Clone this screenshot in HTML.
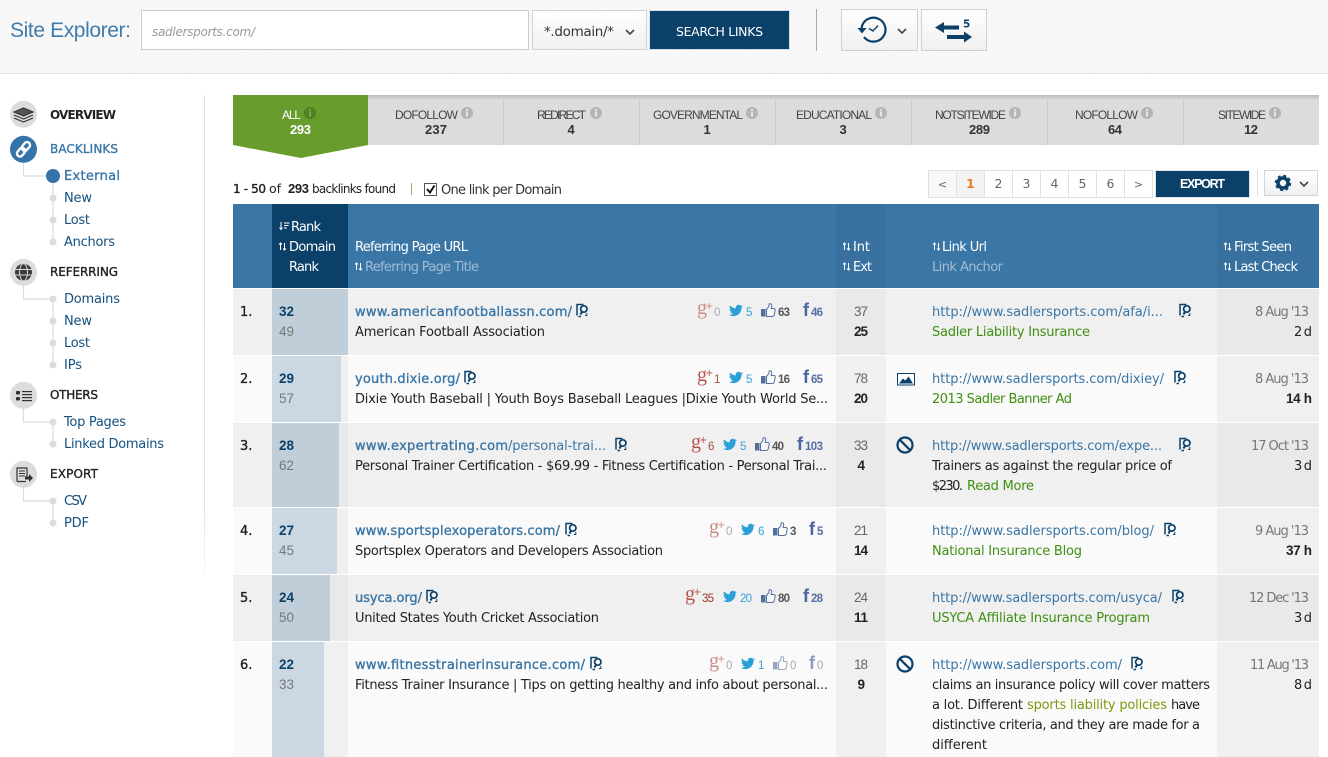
<!DOCTYPE html>
<html lang="en"><head><meta charset="utf-8"><title>Site Explorer</title>
<style>
html,body{margin:0;padding:0;background:#fff;width:1328px;height:757px;overflow:hidden}
svg{display:block}
text{font-family:"DejaVu Sans","Liberation Sans",sans-serif;font-size:13px;fill:#222;white-space:pre}
.b{font-weight:700}
.sb{stroke:currentColor;stroke-width:.35}
.nav{color:#222;fill:#222;font-size:12px}
.sub{fill:#15507f;color:#15507f}
.tab{font-family:"Liberation Sans",sans-serif;font-size:12px;fill:#444}
.tn{font-family:"Liberation Sans",sans-serif;font-size:13px;font-weight:700;fill:#333}
.h{fill:#fff}
.hd{fill:#a3bcd2}
.u{fill:#3a76a6;color:#3a76a6}
.g{fill:#3f8f10}
.gr{fill:#777}
.d{font-family:"Liberation Sans",sans-serif;font-size:13.5px}
.c{font-family:"Liberation Sans",sans-serif;font-size:11.5px;text-anchor:start}
.gp{font-family:"Liberation Serif",serif;font-size:20px}
.gq{font-size:10px}
.fb{font-family:"Liberation Sans",sans-serif;font-weight:700;font-size:18px}
.pg{font-size:12.5px;fill:#666;text-anchor:middle}
</style></head><body>
<svg width="1328" height="757" viewBox="0 0 1328 757" xmlns="http://www.w3.org/2000/svg">
<defs>
<linearGradient id="btn" x1="0" y1="0" x2="0" y2="1"><stop offset="0" stop-color="#fff"/><stop offset="1" stop-color="#f0f0f0"/></linearGradient>
<linearGradient id="tabtop" x1="0" y1="0" x2="0" y2="1"><stop offset="0" stop-color="#bdbdbd"/><stop offset="1" stop-color="#dcdcdc"/></linearGradient>
<linearGradient id="fade" x1="0" y1="0" x2="0" y2="1"><stop offset="0" stop-color="#dedede"/><stop offset=".85" stop-color="#e4e4e4"/><stop offset="1" stop-color="#f6f6f6"/></linearGradient>
<filter id="noise" x="0" y="0" width="100%" height="100%"><feTurbulence type="fractalNoise" baseFrequency=".8" numOctaves="2" seed="3"/><feColorMatrix values="0 0 0 0 .5  0 0 0 0 .5  0 0 0 0 .5  .12 0 0 0 -.02"/></filter>
<g id="s"><path d="M2.500 8V1M1 2.500L2.500 1 4 2.500M6.500 1v7M5 6.500L6.500 8 8 6.500" fill="none" stroke="#fff" stroke-width="1"/></g>
<g id="chev"><path d="M-4-2L0 2 4-2" fill="none" stroke="#444" stroke-width="1.600"/></g>
<g id="sp" fill="none" stroke="#0b4069"><path d="M-5 5.500V-5.500H1.500M-3.500 6.500H-1" stroke-width="1.500"/><circle cx="1.800" cy="-1" r="3.200" stroke-width="1.700"/><path d="M.2 1.500L-1.500 4.500" stroke-width="2"/><path d="M4.800 3V5.500H3" stroke-width="1"/></g>
<g id="no" fill="none" stroke="#0b4069" stroke-width="2.200"><circle r="7.500"/><path d="M-5.300-5.300L5.300 5.300"/></g>
<path id="tw" d="M23.950 4.570a10 10 0 01-2.830.78 4.940 4.940 0 002.160-2.720 9.900 9.900 0 01-3.130 1.190 4.920 4.920 0 00-8.380 4.480A14 14 0 011.640 3.160a4.920 4.920 0 001.520 6.570 4.900 4.900 0 01-2.230-.62v.06a4.920 4.920 0 003.950 4.830 5 5 0 01-2.210.08 4.930 4.930 0 004.600 3.420A9.870 9.870 0 010 19.540a14 14 0 007.550 2.210c9.050 0 14-7.500 14-14 0-.21 0-.42-.02-.63a10 10 0 002.460-2.550z" fill="#2b9fd8"/>
<g id="th"><rect x="0" y="6" width="4.500" height="7.500" fill="#54709f"/><path d="M5.500 6.500L8 3.500V1Q10.500 0 10.800 2.500L10.200 5.500H13.200Q14.800 6 14 8L13.200 12Q12.800 13.500 11 13.500H5.500z" fill="#fff" fill-opacity=".5" stroke="#54709f" stroke-width="1"/></g>
<g id="thl" opacity=".6"><use href="#th"/></g>
<g id="i"><circle r="6" fill="#b5b5b5"/><rect x="-1" y="-1.500" width="2" height="5" fill="#e6e6e6"/><rect x="-1" y="-4" width="2" height="1.700" fill="#e6e6e6"/></g>
</defs>

<!-- header -->
<rect width="1328" height="73" fill="#fafafa"/>
<rect width="1328" height="73" filter="url(#noise)"/>
<rect y="73" width="1328" height="1" fill="#e2e2e2"/>
<text x="10" y="37" textLength="121" style="font-family:'Liberation Sans',sans-serif;font-size:21px;fill:#3f7cae">Site Explorer:</text>
<rect x="141.500" y="10.500" width="387" height="39" fill="#fff" stroke="#ccc"/>
<text x="152" y="36" textLength="103" style="font-size:12px;font-style:italic;fill:#999">sadlersports.com/</text>
<rect x="532.500" y="10.500" width="114" height="39" fill="url(#btn)" stroke="#d2d2d2"/>
<text x="544" y="36" textLength="70" style="font-size:13.500px;fill:#333">*.domain/*</text>
<use href="#chev" x="630" y="32"/>
<rect x="649.500" y="10.500" width="140" height="39" fill="#0b4069" stroke="#d5e0ea"/>
<text x="676" y="36" textLength="87" style="font-size:12.500px;fill:#fff">SEARCH LINKS</text>
<rect x="816" y="9" width="1" height="42" fill="#aaa"/>
<rect x="841.500" y="9.500" width="76" height="41" fill="url(#btn)" stroke="#d0d0d0"/>
<g fill="none" stroke="#0b4069">
<path d="M864 37A12 12 0 1 0 861.600 28" stroke-width="2.200"/>
<path d="M869 28.500L873 31 878 25.500" stroke-width="1.400"/>
</g>
<path d="M857.500 28H866.500L862 33.500z" fill="#0b4069"/>
<use href="#chev" x="902" y="31"/>
<rect x="921.500" y="9.500" width="65" height="41" fill="url(#btn)" stroke="#d0d0d0"/>
<path d="M935 27.500L944 22V25.500H959V29.500H944V33zM972 37L964 31.500V35H947V39H964V42.500z" fill="#0b4069"/>
<text x="963" y="27.500" textLength="7" class="b" style="font-size:10.500px;fill:#0b4069">5</text>

<!-- sidebar -->
<rect x="204" y="95" width="1" height="480" fill="url(#fade)"/>
<g fill="none" stroke="#dcdcdc" stroke-width="1.200">
<path d="M23.500 150V176H53V242"/>
<path d="M23.500 273V299H53V365"/>
<path d="M23.500 396V422H53V444"/>
<path d="M23.500 475V501H53V523"/>
</g>
<g fill="#dcdcdc">
<circle cx="53" cy="198" r="3.500"/><circle cx="53" cy="220" r="3.500"/><circle cx="53" cy="242" r="3.500"/>
<circle cx="53" cy="299" r="3.500"/><circle cx="53" cy="321" r="3.500"/><circle cx="53" cy="343" r="3.500"/><circle cx="53" cy="365" r="3.500"/>
<circle cx="53" cy="422" r="3.500"/><circle cx="53" cy="444" r="3.500"/>
<circle cx="53" cy="501" r="3.500"/><circle cx="53" cy="523" r="3.500"/>
<circle cx="23.500" cy="114.300" r="13.500"/><circle cx="23.500" cy="272.300" r="13.500"/><circle cx="23.500" cy="395.300" r="13.500"/><circle cx="23.500" cy="474.300" r="13.500"/>
</g>
<circle cx="53" cy="176" r="7" fill="#3574a8"/>
<circle cx="23.500" cy="149.300" r="13.500" fill="#3574a8"/>
<!-- layers -->
<g fill="none" stroke="#333" stroke-width="1.200"><path d="M14 112L23.500 108 33 112 23.500 116z" fill="#555"/><path d="M14 115L23.500 119 33 115M14 118L23.500 122 33 118"/></g>
<!-- chain -->
<g fill="none" stroke="#fff" stroke-width="2.400" transform="rotate(-50 23.500 149.300)"><rect x="15" y="146.300" width="9.500" height="6" rx="3"/><rect x="22.500" y="146.300" width="9.500" height="6" rx="3"/></g>
<!-- globe -->
<circle cx="23.500" cy="272.300" r="8.500" fill="#3a3a3a"/>
<g stroke="#dcdcdc" stroke-width="1" fill="none"><path d="M14 269.500H33M14 275H33"/><ellipse cx="23.500" cy="272.300" rx="4" ry="8.500"/></g>
<!-- list -->
<g fill="#333"><rect x="16" y="391" width="4" height="3.500" rx="1"/><rect x="16" y="397" width="4" height="3.500" rx="1"/><rect x="22" y="391" width="10" height="1.200"/><rect x="22" y="394" width="10" height="1.200"/><rect x="22" y="397" width="10" height="1.200"/><rect x="22" y="400" width="10" height="1.200"/></g>
<!-- export -->
<g fill="none" stroke="#333" stroke-width="1.200"><path d="M17 481.500V468H27V477"/><path d="M19 471H25M19 473.500H25M19 476H25" stroke-width=".9"/><path d="M17 481.500H26"/></g>
<path d="M25 476.500H29V474L33 478 29 482V479.500H25z" fill="#333"/>

<text x="50" y="119" textLength="66" class="nav b">OVERVIEW</text>
<text x="50" y="153" textLength="68" class="nav sb" style="fill:#3a76a6;color:#3a76a6">BACKLINKS</text>
<text x="50" y="276" textLength="68" class="nav sb">REFERRING</text>
<text x="50" y="399" textLength="48" class="nav sb">OTHERS</text>
<text x="50" y="478" textLength="48" class="nav sb">EXPORT</text>
<text x="64" y="180" textLength="56" class="sb" style="fill:#3a76a6;color:#3a76a6">External</text>
<text x="64" y="202" textLength="28" class="sub">New</text>
<text x="64" y="224" textLength="26" class="sub">Lost</text>
<text x="64" y="246" textLength="51" class="sub">Anchors</text>
<text x="64" y="303" textLength="56" class="sub">Domains</text>
<text x="64" y="325" textLength="28" class="sub">New</text>
<text x="64" y="347" textLength="26" class="sub">Lost</text>
<text x="64" y="369" textLength="18" class="sub">IPs</text>
<text x="64" y="426" textLength="62" class="sub">Top Pages</text>
<text x="64" y="448" textLength="100" class="sub">Linked Domains</text>
<text x="64" y="505" textLength="23" class="sub">CSV</text>
<text x="64" y="527" textLength="25" class="sub">PDF</text>

<!-- tabs -->
<rect x="233" y="95" width="1086" height="50" fill="#dcdcdc"/>
<rect x="233" y="95" width="1086" height="5" fill="url(#tabtop)"/>
<g fill="#cbcbcb"><rect x="503" y="96" width="1" height="49"/><rect x="639" y="96" width="1" height="49"/><rect x="775" y="96" width="1" height="49"/><rect x="911" y="96" width="1" height="49"/><rect x="1047" y="96" width="1" height="49"/><rect x="1183" y="96" width="1" height="49"/></g>
<path d="M233 95H368V145L301 158 233 145z" fill="#689c2d"/>
<text x="282" y="119" textLength="19" class="tab" style="fill:#fff">ALL</text>
<g transform="translate(310,113)"><circle r="6" fill="#527f22"/><rect x="-1" y="-1.500" width="2" height="5" fill="#7ba84a"/><rect x="-1" y="-4" width="2" height="1.700" fill="#7ba84a"/></g>
<text x="290" y="134" textLength="21" class="tn" style="fill:#fff">293</text>
<text x="395" y="119" textLength="63" class="tab">DOFOLLOW</text><use href="#i" x="467" y="113"/><text x="425" y="134" textLength="22" class="tn">237</text>
<text x="537" y="119" textLength="49" class="tab">REDIRECT</text><use href="#i" x="596" y="113"/><text x="567.500" y="134" class="tn">4</text>
<text x="653" y="119" textLength="90" class="tab">GOVERNMENTAL</text><use href="#i" x="752" y="113"/><text x="703.500" y="134" class="tn">1</text>
<text x="796" y="119" textLength="76" class="tab">EDUCATIONAL</text><use href="#i" x="881" y="113"/><text x="839.500" y="134" class="tn">3</text>
<text x="935" y="119" textLength="71" class="tab">NOTSITEWIDE</text><use href="#i" x="1015" y="113"/><text x="969" y="134" textLength="21" class="tn">289</text>
<text x="1075" y="119" textLength="63" class="tab">NOFOLLOW</text><use href="#i" x="1147" y="113"/><text x="1108" y="134" textLength="14" class="tn">64</text>
<text x="1218" y="119" textLength="48" class="tab">SITEWIDE</text><use href="#i" x="1275" y="113"/><text x="1244" y="134" textLength="14" class="tn">12</text>

<!-- toolbar -->
<text x="233" y="193" textLength="33" class="sb" style="font-size:12px;color:#222">1 - 50</text>
<text x="269" y="193" style="font-size:12.500px">of</text>
<text x="288" y="193" textLength="21" class="d b" style="font-size:13px">293</text>
<text x="312" y="193" textLength="84" style="font-size:12px">backlinks found</text>
<rect x="411" y="183" width="1" height="12" fill="#8cb46a"/>
<rect x="424.500" y="183.500" width="12" height="12" fill="#fff" stroke="#555"/>
<path d="M427 189L430 192.500 434.500 185.500" fill="none" stroke="#111" stroke-width="2"/>
<text x="441" y="194" textLength="121" style="fill:#333">One link per Domain</text>

<g stroke="#e0e0e0" fill="#fff">
<rect x="928.500" y="170.500" width="28" height="27" fill="#f8f8f8"/>
<rect x="956.500" y="170.500" width="28" height="27" fill="#f3f3f3"/>
<rect x="984.500" y="170.500" width="28" height="27"/><rect x="1012.500" y="170.500" width="28" height="27"/><rect x="1040.500" y="170.500" width="28" height="27"/><rect x="1068.500" y="170.500" width="28" height="27"/><rect x="1096.500" y="170.500" width="28" height="27"/><rect x="1124.500" y="170.500" width="28" height="27"/>
</g>
<text x="942.500" y="188" class="pg" style="font-size:11px">&lt;</text>
<text x="970.500" y="188" class="pg b" style="fill:#e67e22">1</text>
<text x="998.500" y="188" class="pg">2</text><text x="1026.500" y="188" class="pg">3</text><text x="1054.500" y="188" class="pg">4</text><text x="1082.500" y="188" class="pg">5</text><text x="1110.500" y="188" class="pg">6</text>
<text x="1138.500" y="188" class="pg" style="font-size:11px">&gt;</text>
<rect x="1155.500" y="170.500" width="94" height="27" fill="#0b4069" stroke="#dbe4ec"/>
<text x="1180" y="188" textLength="45" class="d b" style="font-size:12.500px;fill:#fff">EXPORT</text>
<rect x="1257" y="170" width="1" height="26" fill="#ddd"/>
<rect x="1264.500" y="170.500" width="53" height="25" fill="url(#btn)" stroke="#d5d5d5"/>
<circle cx="1283" cy="183" r="5" fill="none" stroke="#0b4069" stroke-width="3.600"/>
<circle cx="1283" cy="183" r="7" fill="none" stroke="#0b4069" stroke-width="2.400" stroke-dasharray="2.800 2.700"/>
<use href="#chev" x="1304" y="184"/>

<!-- table head -->
<rect x="233" y="204" width="1086" height="84" fill="#3a76a6"/>
<rect x="272" y="204" width="76" height="84" fill="#0b4069"/>
<rect x="836" y="204" width="50" height="84" fill="#38719f"/>
<rect x="1217" y="204" width="102" height="84" fill="#38719f"/>
<path d="M281 229V222M279.500 227.500L281 229.500 282.500 227.500M284 223H289.500M284 225.500H288.500M284 228H287" fill="none" stroke="#fff"/>
<text x="291" y="231" textLength="30" class="h">Rank</text>
<use href="#s" x="278" y="242"/><text x="289" y="251" textLength="47" class="h">Domain</text>
<text x="289" y="271" textLength="30" class="h">Rank</text>
<text x="355" y="251" textLength="113" class="h">Referring Page URL</text>
<use href="#s" x="354" y="262"/><text x="365" y="271" textLength="114" class="hd">Referring Page Title</text>
<use href="#s" x="842" y="242"/><text x="853" y="251" textLength="17" class="h">Int</text>
<use href="#s" x="842" y="262"/><text x="853" y="271" textLength="19" class="h">Ext</text>
<use href="#s" x="932" y="242"/><text x="942" y="251" textLength="45" class="h">Link Url</text>
<text x="932" y="271" textLength="71" class="hd">Link Anchor</text>
<use href="#s" x="1223" y="242"/><text x="1234" y="251" textLength="58" class="h">First Seen</text>
<use href="#s" x="1223" y="262"/><text x="1234" y="271" textLength="64" class="h">Last Check</text>

<!-- row backgrounds -->
<rect x="233" y="289" width="1086" height="66" fill="#f0f0f0"/>
<rect x="233" y="356" width="1086" height="66" fill="#fafafa"/>
<rect x="233" y="423" width="1086" height="84" fill="#f0f0f0"/>
<rect x="233" y="508" width="1086" height="66" fill="#fafafa"/>
<rect x="233" y="575" width="1086" height="66" fill="#f0f0f0"/>
<rect x="233" y="642" width="1086" height="115" fill="#fafafa"/>
<g fill="#e9e9e9">
<rect x="836" y="289" width="50" height="66"/><rect x="1217" y="289" width="102" height="66"/>
<rect x="836" y="423" width="50" height="84"/><rect x="1217" y="423" width="102" height="84"/>
<rect x="836" y="575" width="50" height="66"/><rect x="1217" y="575" width="102" height="66"/>
<rect x="272" y="423" width="76" height="84"/><rect x="272" y="575" width="76" height="66"/>
</g>
<g fill="#f0f0f0">
<rect x="836" y="356" width="50" height="66"/><rect x="1217" y="356" width="102" height="66"/>
<rect x="836" y="508" width="50" height="66"/><rect x="1217" y="508" width="102" height="66"/>
<rect x="836" y="642" width="50" height="115"/><rect x="1217" y="642" width="102" height="115"/>
<rect x="272" y="356" width="76" height="66"/><rect x="272" y="508" width="76" height="66"/><rect x="272" y="642" width="76" height="115"/>
</g>
<g fill="#c0ced9"><rect x="272" y="289" width="76" height="66"/><rect x="272" y="423" width="67" height="84"/><rect x="272" y="575" width="58" height="66"/></g>
<g fill="#cbd8e3"><rect x="272" y="356" width="69" height="66"/><rect x="272" y="508" width="65" height="66"/><rect x="272" y="642" width="52" height="115"/></g>

<!-- row 1 -->
<g>
<text x="240" y="316" class="sb" style="color:#222">1.</text>
<text x="279" y="316" textLength="15" class="d b" style="fill:#0b4069">32</text><text x="279" y="336" textLength="15" class="d gr">49</text>
<text x="355" y="316" textLength="217" class="u sb">www.americanfootballassn.com/</text><use href="#sp" x="582" y="310"/>
<text x="355" y="336" textLength="190">American Football Association</text>
<text x="697" y="314" class="gp" style="fill:#cf8a84">g</text><text x="705" y="309" class="gq" style="fill:#cf8a84">+</text><text x="714" y="316" class="c" style="fill:#aaa">0</text>
<use href="#tw" transform="translate(729,303.500) scale(.58)"/><text x="746" y="316" class="c" style="fill:#3b9fd6">5</text>
<use href="#th" x="761" y="303"/><text x="778" y="316" textLength="12" class="c b" style="fill:#555">63</text>
<text x="803" y="316" class="fb" style="fill:#4a66a0">f</text><text x="811" y="316" textLength="12" class="c b" style="fill:#5570a5">46</text>
<text x="854" y="316" textLength="14" class="d" style="fill:#666">37</text><text x="854" y="336" textLength="14" class="d b">25</text>
<text x="932" y="316" textLength="231" class="u">http://www.sadlersports.com/afa/i...</text><use href="#sp" x="1185" y="310"/>
<text x="932" y="336" textLength="158" class="g">Sadler Liability Insurance</text>
<text x="1255" y="316" textLength="54" style="fill:#777">8 Aug '13</text><text x="1294" y="336" textLength="18">2 d</text>
</g>
<!-- row 2 -->
<g transform="translate(0,67)">
<text x="240" y="316" class="sb" style="color:#222">2.</text>
<text x="279" y="316" textLength="15" class="d b" style="fill:#0b4069">29</text><text x="279" y="336" textLength="15" class="d gr">57</text>
<text x="355" y="316" textLength="105" class="u sb">youth.dixie.org/</text><use href="#sp" x="470" y="310"/>
<text x="355" y="336" textLength="473">Dixie Youth Baseball | Youth Boys Baseball Leagues |Dixie Youth World Se...</text>
<text x="697" y="314" class="gp" style="fill:#b8534a">g</text><text x="705" y="309" class="gq" style="fill:#b8534a">+</text><text x="714" y="316" class="c" style="fill:#a5533a">1</text>
<use href="#tw" transform="translate(729,303.500) scale(.58)"/><text x="746" y="316" class="c" style="fill:#3b9fd6">5</text>
<use href="#th" x="761" y="303"/><text x="778" y="316" textLength="12" class="c b" style="fill:#555">16</text>
<text x="803" y="316" class="fb" style="fill:#4a66a0">f</text><text x="811" y="316" textLength="12" class="c b" style="fill:#5570a5">65</text>
<text x="854" y="316" textLength="14" class="d" style="fill:#666">78</text><text x="854" y="336" textLength="14" class="d b">20</text>
<rect x="897.500" y="306.500" width="17" height="11.500" fill="#fff" stroke="#0b4069"/><path d="M899 316.500L903 311.500 905.500 313.500 908.500 309.500 913 316.500z" fill="#0b4069"/>
<text x="932" y="316" textLength="232" class="u">http://www.sadlersports.com/dixiey/</text><use href="#sp" x="1180" y="310"/>
<text x="932" y="336" textLength="140" class="g">2013 Sadler Banner Ad</text>
<text x="1255" y="316" textLength="54" style="fill:#777">8 Aug '13</text><text x="1286" y="336" textLength="26" class="d b">14 h</text>
</g>
<!-- row 3 -->
<g transform="translate(0,134)">
<text x="240" y="316" class="sb" style="color:#222">3.</text>
<text x="279" y="316" textLength="15" class="d b" style="fill:#0b4069">28</text><text x="279" y="336" textLength="15" class="d gr">62</text>
<text x="355" y="316" textLength="153" class="u sb">www.expertrating.com</text><text x="508" y="316" textLength="98" class="u">/personal-trai...</text><use href="#sp" x="621" y="310"/>
<text x="355" y="336" textLength="472">Personal Trainer Certification - $69.99 - Fitness Certification - Personal Trai...</text>
<text x="691" y="314" class="gp" style="fill:#b8534a">g</text><text x="699" y="309" class="gq" style="fill:#b8534a">+</text><text x="708" y="316" class="c" style="fill:#a5533a">6</text>
<use href="#tw" transform="translate(723,303.500) scale(.58)"/><text x="740" y="316" class="c" style="fill:#3b9fd6">5</text>
<use href="#th" x="755" y="303"/><text x="772" y="316" textLength="12" class="c b" style="fill:#555">40</text>
<text x="797" y="316" class="fb" style="fill:#4a66a0">f</text><text x="805" y="316" textLength="18" class="c b" style="fill:#5570a5">103</text>
<text x="854" y="316" textLength="14" class="d" style="fill:#666">33</text><text x="857.500" y="336" class="d b">4</text>
<use href="#no" x="905" y="311"/>
<text x="932" y="316" textLength="230" class="u">http://www.sadlersports.com/expe...</text><use href="#sp" x="1185" y="310"/>
<text x="932" y="336" textLength="240">Trainers as against the regular price of</text>
<text x="932" y="356" textLength="31">$230.</text><text x="967" y="356" textLength="67" class="g">Read More</text>
<text x="1251" y="316" textLength="58" style="fill:#777">17 Oct '13</text><text x="1294" y="336" textLength="18">3 d</text>
</g>
<!-- row 4 -->
<g transform="translate(0,219)">
<text x="240" y="316" class="sb" style="color:#222">4.</text>
<text x="279" y="316" textLength="15" class="d b" style="fill:#0b4069">27</text><text x="279" y="336" textLength="15" class="d gr">45</text>
<text x="355" y="316" textLength="205" class="u sb">www.sportsplexoperators.com/</text><use href="#sp" x="571" y="310"/>
<text x="355" y="336" textLength="308">Sportsplex Operators and Developers Association</text>
<text x="709" y="314" class="gp" style="fill:#cf8a84">g</text><text x="717" y="309" class="gq" style="fill:#cf8a84">+</text><text x="726" y="316" class="c" style="fill:#aaa">0</text>
<use href="#tw" transform="translate(741,303.500) scale(.58)"/><text x="758" y="316" class="c" style="fill:#3b9fd6">6</text>
<use href="#th" x="773" y="303"/><text x="790" y="316" class="c b" style="fill:#555">3</text>
<text x="809" y="316" class="fb" style="fill:#4a66a0">f</text><text x="817" y="316" class="c b" style="fill:#5570a5">5</text>
<text x="854" y="316" textLength="14" class="d" style="fill:#666">21</text><text x="854" y="336" textLength="14" class="d b">14</text>
<text x="932" y="316" textLength="222" class="u">http://www.sadlersports.com/blog/</text><use href="#sp" x="1170" y="310"/>
<text x="932" y="336" textLength="150" class="g">National Insurance Blog</text>
<text x="1255" y="316" textLength="54" style="fill:#777">9 Aug '13</text><text x="1286" y="336" textLength="26" class="d b">37 h</text>
</g>
<!-- row 5 -->
<g transform="translate(0,286)">
<text x="240" y="316" class="sb" style="color:#222">5.</text>
<text x="279" y="316" textLength="15" class="d b" style="fill:#0b4069">24</text><text x="279" y="336" textLength="15" class="d gr">50</text>
<text x="355" y="316" textLength="67" class="u sb">usyca.org/</text><use href="#sp" x="432" y="310"/>
<text x="355" y="336" textLength="244">United States Youth Cricket Association</text>
<text x="685" y="314" class="gp" style="fill:#b8534a">g</text><text x="693" y="309" class="gq" style="fill:#b8534a">+</text><text x="702" y="316" textLength="12" class="c" style="fill:#a5332a">35</text>
<use href="#tw" transform="translate(723,303.500) scale(.58)"/><text x="740" y="316" textLength="12" class="c" style="fill:#3b9fd6">20</text>
<use href="#th" x="761" y="303"/><text x="778" y="316" textLength="12" class="c b" style="fill:#555">80</text>
<text x="803" y="316" class="fb" style="fill:#4a66a0">f</text><text x="811" y="316" textLength="12" class="c b" style="fill:#5570a5">28</text>
<text x="854" y="316" textLength="14" class="d" style="fill:#666">24</text><text x="854" y="336" textLength="14" class="d b">11</text>
<text x="932" y="316" textLength="230" class="u">http://www.sadlersports.com/usyca/</text><use href="#sp" x="1178" y="310"/>
<text x="932" y="336" textLength="218" class="g">USYCA Affiliate Insurance Program</text>
<text x="1249" y="316" textLength="60" style="fill:#777">12 Dec '13</text><text x="1294" y="336" textLength="18">3 d</text>
</g>
<!-- row 6 -->
<g transform="translate(0,353)">
<text x="240" y="316" class="sb" style="color:#222">6.</text>
<text x="279" y="316" textLength="15" class="d b" style="fill:#0b4069">22</text><text x="279" y="336" textLength="15" class="d gr">33</text>
<text x="355" y="316" textLength="230" class="u sb">www.fitnesstrainerinsurance.com/</text><use href="#sp" x="596" y="310"/>
<text x="355" y="336" textLength="473">Fitness Trainer Insurance | Tips on getting healthy and info about personal...</text>
<text x="709" y="314" class="gp" style="fill:#cf8a84">g</text><text x="717" y="309" class="gq" style="fill:#cf8a84">+</text><text x="726" y="316" class="c" style="fill:#aaa">0</text>
<use href="#tw" transform="translate(741,303.500) scale(.58)"/><text x="758" y="316" class="c" style="fill:#3b9fd6">1</text>
<use href="#thl" x="773" y="303"/><text x="790" y="316" class="c" style="fill:#aaa">0</text>
<text x="809" y="316" class="fb" style="fill:#8a9cc2">f</text><text x="817" y="316" class="c" style="fill:#aaa">0</text>
<text x="854" y="316" textLength="14" class="d" style="fill:#666">18</text><text x="857.500" y="336" class="d b">9</text>
<use href="#no" x="905" y="311"/>
<text x="932" y="316" textLength="190" class="u">http://www.sadlersports.com/</text><use href="#sp" x="1137" y="310"/>
<text x="932" y="336" textLength="278">claims an insurance policy will cover matters</text>
<text x="932" y="356" textLength="91">a lot. Different</text><text x="1027" y="356" textLength="140" style="fill:#7a9a10">sports liability policies</text><text x="1171" y="356" textLength="29">have</text>
<text x="932" y="376" textLength="268">distinctive criteria, and they are made for a</text>
<text x="932" y="396" textLength="55">different</text>
<text x="1250" y="316" textLength="59" style="fill:#777">11 Aug '13</text><text x="1294" y="336" textLength="18">8 d</text>
</g>
</svg>
</body></html>
